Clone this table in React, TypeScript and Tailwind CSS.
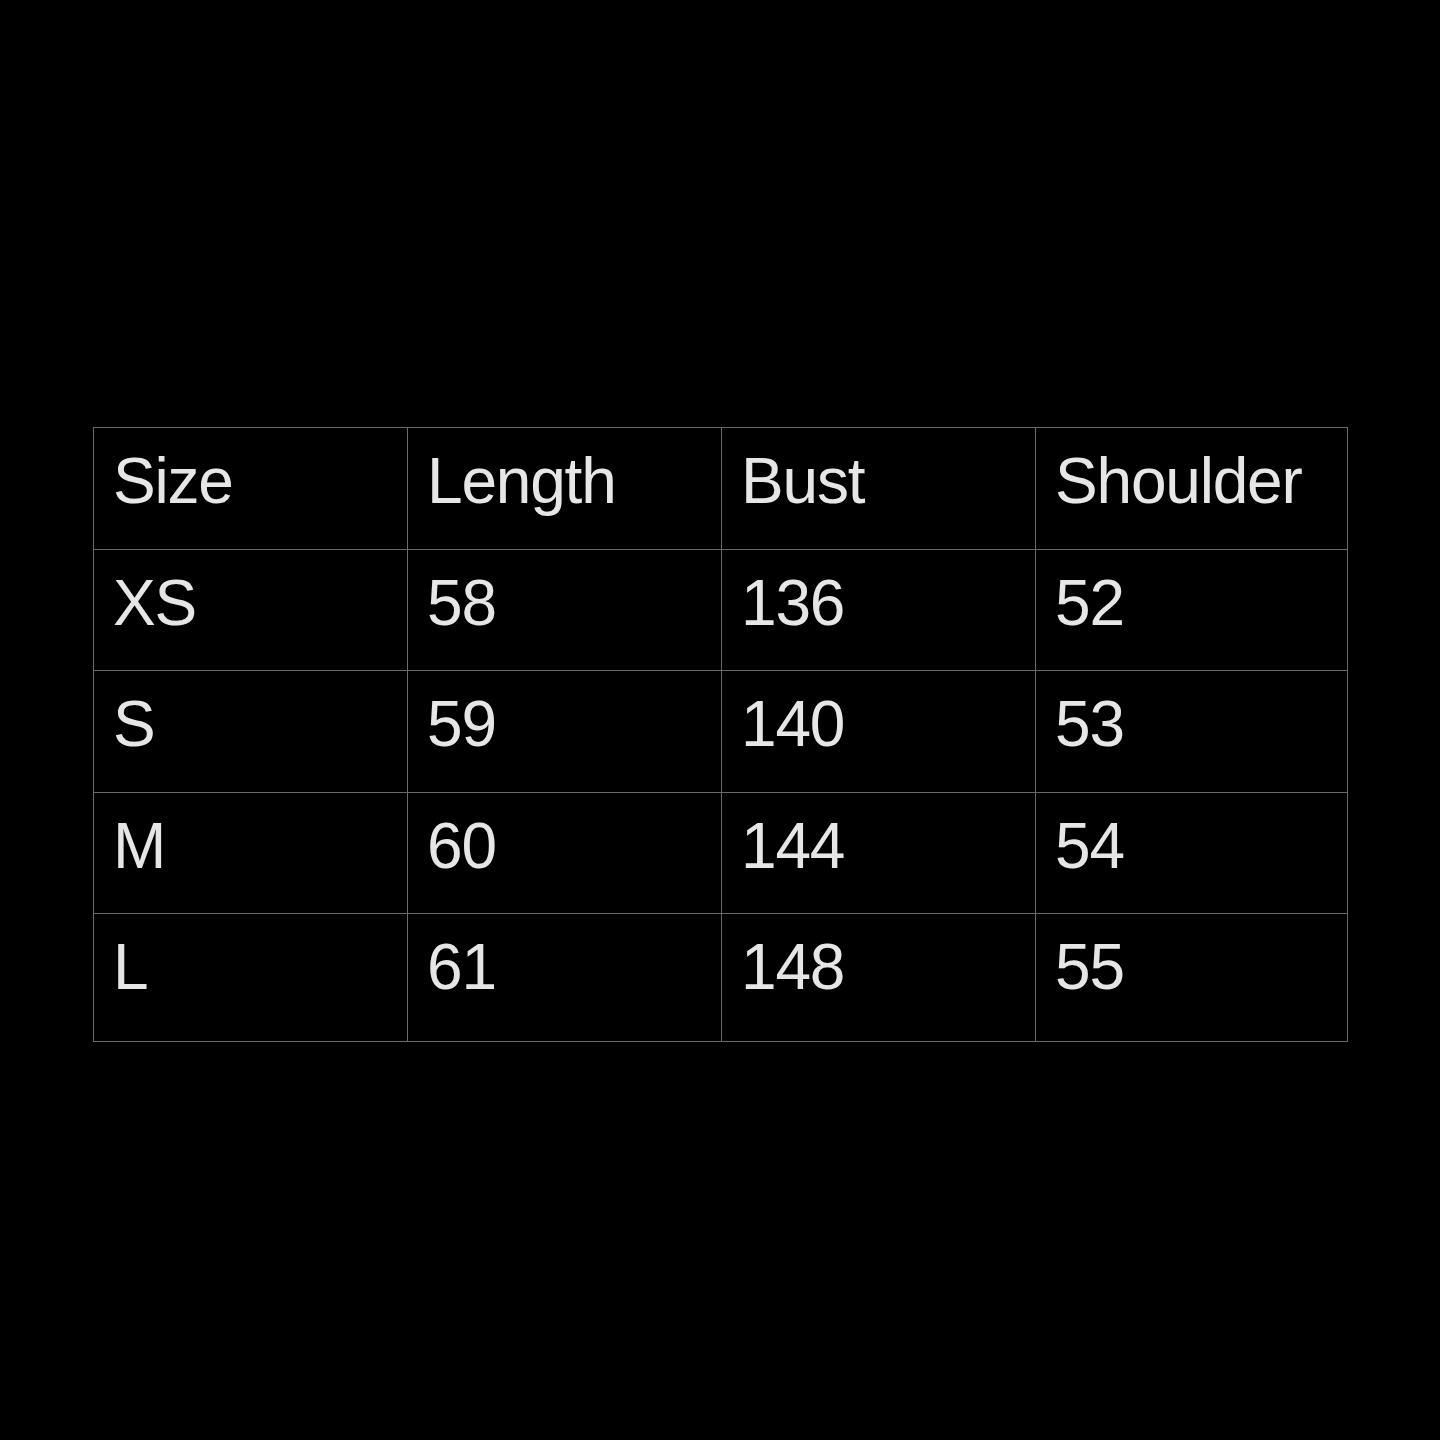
const rows = [
  { cells: ["Size", "Length", "Bust", "Shoulder"], h: "h-[122px]" },
  { cells: ["XS", "58", "136", "52"], h: "h-[121px]" },
  { cells: ["S", "59", "140", "53"], h: "h-[122px]" },
  { cells: ["M", "60", "144", "54"], h: "h-[121px]" },
  { cells: ["L", "61", "148", "55"], h: "h-[128px]" },
];

export default function App() {
  return (
    <div className="w-[1440px] h-[1440px] bg-black pt-[427px] pl-[93px] font-['Liberation_Sans',Arial,sans-serif]">
      <div className="grid w-fit grid-cols-[314px_314px_314px_312px] border-r border-b border-[#6a6a6a]">
        {rows.map((row, i) =>
          row.cells.map((c, j) => (
            <div
              key={i + "-" + j}
              className={`${row.h} border-l border-t border-[#6a6a6a] pl-[19px] pt-[21px] text-[64px] leading-none tracking-[-1.2px] text-[#e6e6e6]`}
            >
              {c}
            </div>
          ))
        )}
      </div>
    </div>
  );
}
